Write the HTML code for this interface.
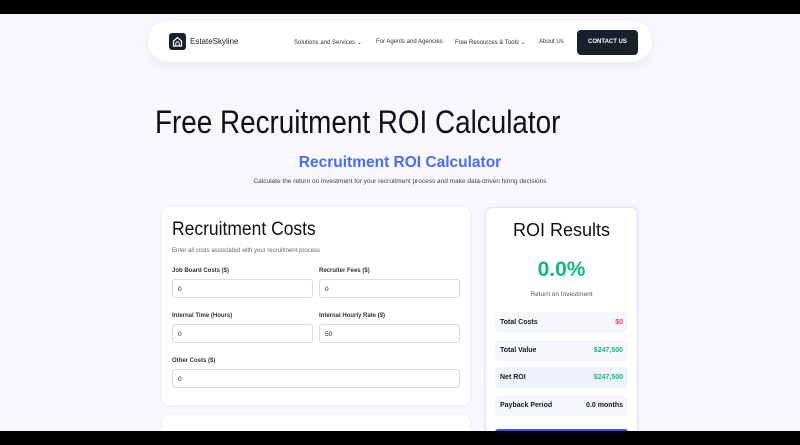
<!DOCTYPE html><html><head><style>
*{margin:0;padding:0;box-sizing:border-box}
html,body{width:800px;height:445px;overflow:hidden}
body{background:#f7f7fd;font-family:"Liberation Sans",sans-serif;position:relative;color:#111827}
.a{position:absolute}
.bar{background:#000;left:0;width:800px;height:14px}
.nav{left:148px;top:21px;width:504px;height:41px;background:#fff;border-radius:21px;box-shadow:0 3px 10px rgba(0,0,0,.06)}
.nl{font-size:6px;color:#333;top:39px}
.card{background:#fff;border-radius:7px;box-shadow:0 1px 4px rgba(0,0,0,.06)}
.lb{font-size:6px;font-weight:bold;color:#333}
.in{height:19px;border:1px solid #ddd;border-radius:3px;background:#fff;font-size:6.5px;padding:6px 0 0 5px}
.row{left:495px;width:133px;height:21px;background:#f5f7fc;border-radius:4px;font-size:7px;font-weight:bold;padding:7px 5px 0 5px}
.row span{float:right}
</style></head><body>
<div class="a bar" style="top:0"></div>
<div class="a nav"></div>
<div class="a" style="left:169px;top:33px;width:17px;height:17px;background:#1a202c;border-radius:3px"><svg width="17" height="17" viewBox="0 0 17 17"><path d="M4.5 13V8L8.5 4.5 12.5 8v5z" fill="none" stroke="#fff" stroke-width="1.2"/><path d="M6.8 13v-2.5a1.7 1.7 0 0 1 3.4 0V13" fill="none" stroke="#fff" stroke-width="1"/></svg></div>
<div class="a" style="left:190px;top:37px;font-size:8px;color:#222">EstateSkyline</div>
<div class="a nl" style="left:294px">Solutions and Services &#8964;</div>
<div class="a nl" style="left:376px">For Agents and Agencies</div>
<div class="a nl" style="left:455px">Free Resources &amp; Tools &#8964;</div>
<div class="a nl" style="left:539px">About Us</div>
<div class="a" style="left:577px;top:30px;width:61px;height:25px;background:#18202c;border-radius:4px;color:#fff;font-size:6px;font-weight:bold;text-align:center;line-height:25px">CONTACT US</div>
<div class="a" style="left:155px;top:104px;font-size:32px;color:#111;transform:scaleX(.87);transform-origin:0 0;white-space:nowrap">Free Recruitment ROI Calculator</div>
<div class="a" style="left:0;width:800px;text-align:center;top:154px;font-size:15.5px;font-weight:bold;color:#4a6cf0">Recruitment ROI Calculator</div>
<div class="a" style="left:0;width:800px;text-align:center;top:178px;font-size:6.5px;color:#444">Calculate the return on investment for your recruitment process and make data-driven hiring decisions</div>
<div class="a card" style="left:162px;top:207px;width:308px;height:198px"></div>
<div class="a" style="left:172px;top:219px;font-size:19px;color:#111;transform:scaleX(.92);transform-origin:0 0;white-space:nowrap">Recruitment Costs</div>
<div class="a" style="left:172px;top:248px;font-size:6px;color:#666">Enter all costs associated with your recruitment process</div>
<div class="a lb" style="left:172px;top:268px">Job Board Costs ($)</div>
<div class="a lb" style="left:319px;top:268px">Recruiter Fees ($)</div>
<div class="a in" style="left:172px;top:279px;width:141px">0</div>
<div class="a in" style="left:319px;top:279px;width:141px">0</div>
<div class="a lb" style="left:172px;top:313px">Internal Time (Hours)</div>
<div class="a lb" style="left:319px;top:313px">Internal Hourly Rate ($)</div>
<div class="a in" style="left:172px;top:324px;width:141px">0</div>
<div class="a in" style="left:319px;top:324px;width:141px">50</div>
<div class="a lb" style="left:172px;top:358px">Other Costs ($)</div>
<div class="a in" style="left:172px;top:369px;width:288px">0</div>
<div class="a card" style="left:162px;top:415px;width:308px;height:40px"></div>
<div class="a card" style="left:485px;top:207px;width:153px;height:240px;border:1px solid #dde3fb"></div>
<div class="a" style="left:485px;width:153px;text-align:center;top:220px;font-size:18px;color:#111">ROI Results</div>
<div class="a" style="left:485px;width:153px;text-align:center;top:258px;font-size:21px;font-weight:bold;color:#10b981">0.0%</div>
<div class="a" style="left:485px;width:153px;text-align:center;top:291px;font-size:6.5px;color:#555">Return on Investment</div>
<div class="a row" style="top:312px">Total Costs<span style="color:#ef4444">$0</span></div>
<div class="a row" style="top:340px">Total Value<span style="color:#10b981">$247,500</span></div>
<div class="a row" style="top:367px;background:#eef2fb">Net ROI<span style="color:#10b981">$247,500</span></div>
<div class="a row" style="top:395px">Payback Period<span>0.0 months</span></div>
<div class="a" style="left:495px;top:429px;width:133px;height:6px;background:#4256c8;border-radius:3px"></div>
<div class="a bar" style="top:431px"></div>
</body></html>
